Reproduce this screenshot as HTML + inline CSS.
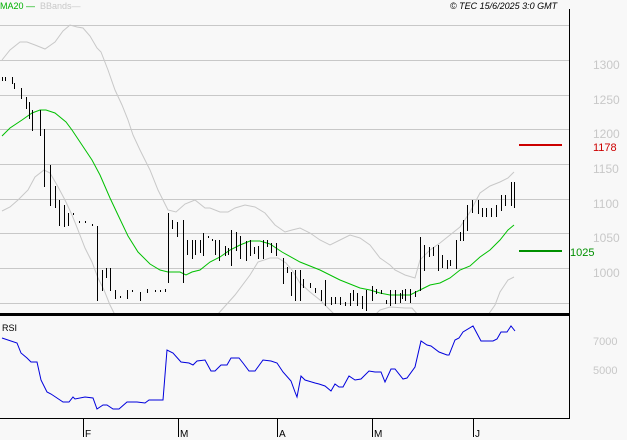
<!DOCTYPE html>
<html><head><meta charset="utf-8"><style>
html,body{margin:0;padding:0;background:#f8f8f8;}
svg{display:block;font-family:"Liberation Sans",sans-serif;}
</style></head><body>
<svg width="627" height="440" viewBox="0 0 627 440" xmlns="http://www.w3.org/2000/svg">
<rect width="627" height="440" fill="#f8f8f8"/>
<g stroke="#c8c8c8" stroke-width="1" shape-rendering="crispEdges">
<path d="M0 25.5H569M0 60.5H569M0 95.5H569M0 129.5H569M0 164.5H569M0 199.5H569M0 233.5H569M0 268.5H569M0 303.5H569"/>
</g>
<g fill="none" stroke="#c8c8c8" stroke-width="1">
<path d="M2,60 L10,50 L20,42 L27,42 L35,45 L45,49 L55,42 L63,31 L70,25 L77,27 L83,28 L90,36 L97,48 L101,52 L108,70 L115,90 L122,105 L128,120 L133,135 L140,150 L150,170 L158,190 L163,200 L168,210 L176,212 L185,204 L195,200 L205,208 L210,208 L220,212 L228,212 L235,208 L245,205 L255,207 L265,213 L275,225 L285,232 L292,230 L300,228 L310,233 L320,240 L330,245 L340,240 L350,235 L360,238 L370,245 L380,258 L390,265 L395,270 L405,275 L415,278 L420,260 L430,250 L440,243 L450,235 L460,227 L470,212 L480,193 L490,186 L500,182 L508,178 L514,172"/>
<path d="M2,211 L10,207 L18,200 L28,190 L35,177 L44,170 L50,173 L57,185 L65,200 L72,215 L78,230 L85,248 L92,262 L98,278 L104,290 L110,305 L115,315"/>
<path d="M218,314 L235,295 L250,275 L258,262 L270,258 L278,258 L286,263 L292,270 L300,283 L310,292 L320,300 L330,310 L335,315"/>
<path d="M375,315 L380,310 L390,307 L405,308 L412,308 L418,315"/>
<path d="M488,315 L495,305 L500,292 L508,280 L514,277"/>
</g>
<path fill="none" stroke="#00c000" stroke-width="1" d="M2,136 L10,128 L22,120 L32,113 L40,110 L46,110 L55,113 L66,122 L72,130 L82,145 L92,160 L100,175 L110,198 L118,215 L128,236 L138,252 L150,264 L160,270 L168,272 L180,272 L186,275 L192,272 L200,270 L210,262 L220,257 L230,250 L240,245 L250,241 L260,241 L270,244 L282,252 L300,262 L320,270 L340,280 L360,288 L370,290 L380,293 L390,295 L410,295 L420,290 L430,285 L440,283 L450,278 L460,270 L470,266 L480,257 L490,250 L500,240 L508,230 L514,225"/>
<path fill="none" stroke="#000" stroke-width="1" shape-rendering="crispEdges" d="
M2.5 77V81M5.5 77V81M12.5 77V84M14.5 83V89M21.5 88V99M26.5 97V109M29.5 102V119M32.5 110V131M40.5 110V136M44.5 129V187M50.5 165V206M55.5 186V208M59.5 200V226M64.5 205V227M68.5 213V226M73.5 213V215M79.5 221V223M85.5 221V223M92.5 224V226M97.5 226V301M102.5 270V291M106.5 268V278M110.5 268V291M115.5 290V299M120.5 296V298M127.5 290V299M132.5 290V292M140.5 292V301M147.5 289V293M155.5 290V292M160.5 290V292M165.5 289V292
M168.5 213V283M172.5 220V229M177.5 222V237M183.5 220V283M187.5 240V255M192.5 240V259M195.5 240V255M200.5 240V253M203.5 233V256M208.5 236V238M212.5 239V241M215.5 240V255M219.5 240V261M225.5 246V256M228.5 248V255M231.5 230V266M236.5 232V251M240.5 236V259M246.5 241V261M250.5 240V256M254.5 247V254M258.5 246V259M263.5 240V259M267.5 240V247M271.5 243V253M276.5 243V256M283.5 258V284M287.5 267V273M291.5 272V296M295.5 270V301M300.5 270V301M303.5 279V288M310.5 283V288M315.5 288V293M321.5 290V301M325.5 280V306M331.5 297V305M335.5 297V304M340.5 297V305M345.5 302V306M350.5 293V306M353.5 290V301M357.5 293V306M362.5 296V309M366.5 290V311M372.5 286V301M376.5 289V294M381.5 290V294M386.5 300V304M390.5 290V306M395.5 290V304M400.5 293V303
M402.5 290V299M405.5 289V301M410.5 289V303M415.5 291V297M420.5 237V291M424.5 245V271M429.5 247V257M433.5 247V256M438.5 245V271M442.5 255V268M447.5 260V269M450.5 260V266M456.5 240V269M460.5 232V241M463.5 220V241M467.5 205V231M472.5 200V213M478.5 200V214M482.5 208V217M486.5 208V217M491.5 208V217M496.5 205V217M501.5 195V211M505.5 195V206M511.5 182V206M514.5 182V208"/>
<rect x="0" y="313" width="569" height="3" fill="#000"/>
<rect x="569" y="9" width="1" height="410" fill="#000"/>
<rect x="0" y="418" width="570" height="1" fill="#000"/>
<rect x="519" y="144" width="43" height="2" fill="#cc0000"/>
<rect x="519" y="250" width="43" height="2" fill="#009000"/>
<text x="593" y="151" font-size="11" fill="#cc0000">1178</text>
<text x="570" y="256" font-size="11" fill="#009000">1025</text>
<g font-size="12" fill="#c8c8c8">
<text x="593" y="69">1300</text><text x="593" y="104">1250</text><text x="593" y="138">1200</text><text x="593" y="173">1150</text><text x="593" y="208">1100</text><text x="593" y="242">1050</text><text x="593" y="277">1000</text>
<text x="593" y="345" font-size="11">7000</text><text x="593" y="374" font-size="11">5000</text>
</g>
<text x="0" y="9" font-size="9" fill="#00b000">MA20 —</text>
<text x="40" y="9" font-size="9" fill="#c8c8c8">BBands—</text>
<text x="450" y="9" font-size="9" font-style="italic" fill="#000">© TEC 15/6/2025 3:0 GMT</text>
<text x="2" y="331" font-size="9" fill="#000">RSI</text>
<path fill="none" stroke="#0000dd" stroke-width="1" d="M2,338 L17,343 L21,353 L27,358 L31,362 L37,362 L41,380 L47,392 L51,394 L57,398 L63,402 L69,402 L73,397 L75,399 L85,397 L93,398 L97,409 L103,405 L107,405 L113,409 L119,409 L127,402 L137,402 L145,403 L149,400 L163,400 L167,350 L173,353 L181,362 L189,363 L193,365 L197,361 L205,360 L211,371 L215,371 L221,365 L227,365 L231,358 L239,358 L243,363 L249,371 L255,371 L263,360 L271,361 L277,363 L283,372 L291,381 L295,392 L297,397 L301,376 L305,380 L315,383 L319,384 L325,386 L331,391 L335,384 L339,387 L343,387 L349,376 L355,380 L361,379 L369,371 L375,372 L381,372 L385,382 L391,369 L395,369 L403,379 L407,378 L415,367 L421,341 L427,345 L431,346 L439,352 L447,355 L449,355 L455,340 L459,338 L463,332 L473,326 L481,341 L493,341 L497,339 L501,332 L507,332 L511,326 L515,331"/>
<g stroke="#000" stroke-width="1" shape-rendering="crispEdges">
<path d="M83.5 419V437M178.5 419V437M277.5 419V437M372.5 419V437M473.5 419V437"/>
</g>
<g font-size="10" fill="#000">
<text x="85" y="437">F</text><text x="180" y="437">M</text><text x="279" y="437">A</text><text x="374" y="437">M</text><text x="475" y="437">J</text>
</g>
</svg>
</body></html>
